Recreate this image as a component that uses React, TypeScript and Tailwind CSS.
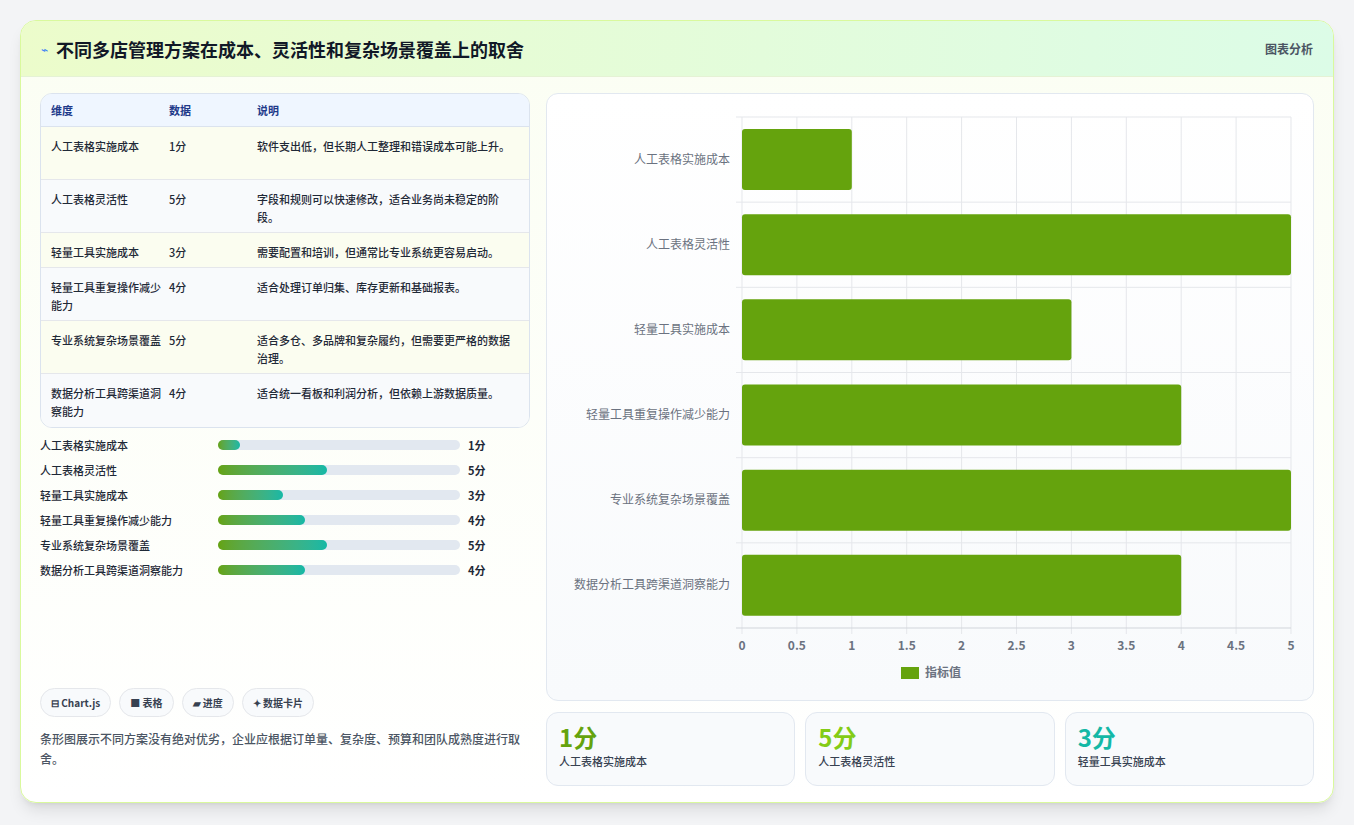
import React from 'react'

const rows = [
  { name: '人工表格实施成本', v: 1, d: '软件支出低，但长期人工整理和错误成本可能上升。', tall: true },
  { name: '人工表格灵活性', v: 5, d: '字段和规则可以快速修改，适合业务尚未稳定的阶段。', tall: true },
  { name: '轻量工具实施成本', v: 3, d: '需要配置和培训，但通常比专业系统更容易启动。', tall: false },
  { name: '轻量工具重复操作减少能力', v: 4, d: '适合处理订单归集、库存更新和基础报表。', tall: true },
  { name: '专业系统复杂场景覆盖', v: 5, d: '适合多仓、多品牌和复杂履约，但需要更严格的数据治理。', tall: true },
  { name: '数据分析工具跨渠道洞察能力', v: 4, d: '适合统一看板和利润分析，但依赖上游数据质量。', tall: true },
]

function Chart() {
  const L = 195, R = 744, T = 23, B = 534
  const u = (R - L) / 5
  const rh = (B - T) / 6
  const ticks = [0, 0.5, 1, 1.5, 2, 2.5, 3, 3.5, 4, 4.5, 5]
  return (
    <svg width="768" height="606" className="block" style={{ fontFamily: '"Noto Sans CJK SC", sans-serif' }}>
      {ticks.map((t) => (
        <line key={t} x1={L + t * u} x2={L + t * u} y1={T} y2={B + 6} stroke="#e5e7eb" />
      ))}
      {rows.map((_, i) => (
        <line key={i} x1={L - 6} x2={R} y1={T + i * rh} y2={T + i * rh} stroke="#e5e7eb" />
      ))}
      <line x1={L - 6} x2={R} y1={B} y2={B} stroke="#d1d5db" />
      {rows.map((r, i) => (
        <g key={r.name}>
          <rect x={L} y={T + i * rh + 12} width={r.v * u} height={61} rx="3" fill="#65a30d" />
          <text x={L - 12} y={T + i * rh + rh / 2 + 4} textAnchor="end" fontSize="12" fill="#6b7280">{r.name}</text>
        </g>
      ))}
      {ticks.map((t) => (
        <text key={t} x={L + t * u} y={556} textAnchor="middle" fontSize="12" fontWeight="600" fill="#6b7280">{t}</text>
      ))}
      <rect x={354} y={573} width={18} height={12} fill="#65a30d" />
      <text x={378} y={583} fontSize="12" fontWeight="600" fill="#6b7280">指标值</text>
    </svg>
  )
}

export default function App() {
  return (
    <div className="min-h-[825px] bg-[#f3f4f6] p-5 pb-0" style={{ fontFamily: '"Noto Sans CJK SC", "Noto Sans", sans-serif' }}>
      <div className="h-[783px] overflow-hidden rounded-2xl border border-[#d9f99d] bg-gradient-to-b from-[#fbfef3] to-white shadow-lg">
        <div className="flex h-[56px] items-center justify-between border-b border-[#e5f2d5] bg-gradient-to-r from-[#ecfccb] to-[#dcfce7] px-5">
          <div className="flex items-center gap-2">
            <span className="text-xs text-[#3b82f6]">⌁</span>
            <h1 className="text-lg font-bold text-[#111827]">不同多店管理方案在成本、灵活性和复杂场景覆盖上的取舍</h1>
          </div>
          <span className="text-xs font-semibold text-[#4b5563]">图表分析</span>
        </div>
        <div className="flex gap-4 px-[19px] pt-4">
          <div className="flex h-[692px] w-[491px] flex-col">
            <div className="overflow-hidden rounded-xl border border-[#dbe3ee]">
              <div className="flex h-[33px] items-center border-b border-[#dbe3ee] bg-[#eff6ff] px-2.5 text-[11px] font-semibold text-[#1e3a8a]">
                <span className="w-[118px]">维度</span><span className="w-[88px]">数据</span><span>说明</span>
              </div>
              {rows.map((r, i) => (
                <div key={r.name} className={`flex border-b border-[#e5e7eb] px-2.5 pt-[10px] text-[11px] font-medium leading-[18px] text-[#1f2937] last:border-b-0 ${r.tall ? 'h-[53px]' : 'h-[35px]'} ${i % 2 === 0 ? 'bg-[#fbfdf0]' : 'bg-[#f8fafc]'}`}>
                  <span className="w-[118px] pr-2">{r.name}</span>
                  <span className="w-[88px]">{r.v}分</span>
                  <span className="flex-1 pr-2">{r.d}</span>
                </div>
              ))}
            </div>
            <div className="mt-2 flex flex-col gap-[7px]">
              {rows.map((r) => (
                <div key={r.name} className="flex h-[18px] items-center text-[11px] font-medium text-[#1f2937]">
                  <span className="w-[178px]">{r.name}</span>
                  <div className="h-[10px] w-[242px] rounded-full bg-[#e2e8f0]">
                    <div className="h-full rounded-full bg-gradient-to-r from-[#65a30d] to-[#14b8a6]" style={{ width: `${(r.v / 5) * 45}%` }} />
                  </div>
                  <span className="ml-2 font-bold">{r.v}分</span>
                </div>
              ))}
            </div>
            <div className="mt-auto pb-4">
              <div className="flex gap-2 text-[10px] font-semibold text-[#374151]">
                {['⊟ Chart.js', '■ 表格', '▰ 进度', '✦ 数据卡片'].map((t) => (
                  <span key={t} className="rounded-full border border-[#e5e7eb] bg-[#f8fafc] px-2.5 py-[6px]">{t}</span>
                ))}
              </div>
              <p className="mt-3 text-[12px] font-medium leading-[20px] text-[#4b5563]">条形图展示不同方案没有绝对优劣，企业应根据订单量、复杂度、预算和团队成熟度进行取舍。</p>
            </div>
          </div>
          <div className="flex w-[768px] flex-col gap-[11px]">
            <div className="h-[608px] rounded-xl border border-[#e2e8f0] bg-gradient-to-b from-white to-[#f8fafc]">
              <Chart />
            </div>
            <div className="grid grid-cols-3 gap-[10px]">
              {[
                ['1分', 'text-[#65a30d]', '人工表格实施成本'],
                ['5分', 'text-[#84cc16]', '人工表格灵活性'],
                ['3分', 'text-[#14b8a6]', '轻量工具实施成本'],
              ].map(([v, c, l]) => (
                <div key={l} className="h-[74px] rounded-xl border border-[#e2e8f0] bg-[#f8fafc] px-3 pt-2">
                  <div className={`text-[24px] font-bold leading-[32px] ${c}`}>{v}</div>
                  <div className="text-[11px] font-medium text-[#374151]">{l}</div>
                </div>
              ))}
            </div>
          </div>
        </div>
      </div>
    </div>
  )
}
